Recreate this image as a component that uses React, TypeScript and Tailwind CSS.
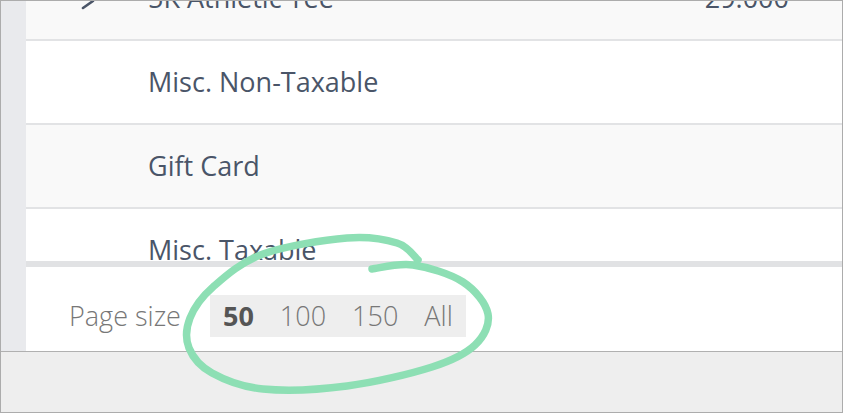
import React from "react";

const pts: [number, number][] = [
  [372, 269],
  [413, 265],
  [463, 282],
  [488, 314],
  [475, 345],
  [432, 367],
  [347, 386],
  [263, 389],
  [212, 373],
  [189, 348],
  [190, 318],
  [213, 287],
  [263, 254],
  [347, 238],
  [397, 243],
  [418, 260],
];

function catmull(points: [number, number][]) {
  let d = `M ${points[0][0]} ${points[0][1]}`;
  for (let i = 0; i < points.length - 1; i++) {
    const p0 = points[i - 1] || points[i];
    const p1 = points[i];
    const p2 = points[i + 1];
    const p3 = points[i + 2] || p2;
    const c1x = p1[0] + (p2[0] - p0[0]) / 6;
    const c1y = p1[1] + (p2[1] - p0[1]) / 6;
    const c2x = p2[0] - (p3[0] - p1[0]) / 6;
    const c2y = p2[1] - (p3[1] - p1[1]) / 6;
    d += ` C ${c1x} ${c1y} ${c2x} ${c2y} ${p2[0]} ${p2[1]}`;
  }
  return d;
}

const font = { fontFamily: '"Open Sans", "Noto Sans", sans-serif' };

function Row({
  label,
  value,
  bg,
  chevron,
  className = "",
}: {
  label: string;
  value?: string;
  bg: string;
  chevron?: boolean;
  className?: string;
}) {
  return (
    <div
      className={`relative flex h-[84px] shrink-0 items-center border-b-2 border-[#e2e3e5] pr-[53px] text-[27px] text-[#4a5568] ${bg} ${className}`}
    >
      <div className="flex w-[122px] shrink-0 items-center pl-[55px]">
        {chevron && (
          <svg width="14" height="18" viewBox="0 0 14 18" className="mt-[6px]">
            <polyline
              points="2,2 12,9 2,16"
              fill="none"
              stroke="#4a5568"
              strokeWidth="2.6"
              strokeLinecap="round"
              strokeLinejoin="round"
            />
          </svg>
        )}
      </div>
      <span className="flex-1">{label}</span>
      {value && <span>{value}</span>}
    </div>
  );
}

export default function App() {
  return (
    <div
      className="relative flex h-[413px] w-[843px] flex-col overflow-hidden border border-[#acacac] bg-white"
      style={font}
    >
      <div className="flex h-[350px] shrink-0">
        <div className="w-[25px] shrink-0 bg-[#e9eaed]" />
        <div className="flex flex-1 flex-col">
          <div className="flex h-[260px] shrink-0 flex-col overflow-hidden">
            <Row label="5K Athletic Tee" value="29.000" bg="bg-[#f9f9f9]" chevron className="-mt-[44px]" />
            <Row label="Misc. Non-Taxable" bg="bg-white" />
            <Row label="Gift Card" bg="bg-[#f9f9f9]" />
            <Row label="Misc. Taxable" bg="bg-white" />
          </div>
          <div className="h-[6px] shrink-0 bg-[#e1e2e4]" />
          <div className="flex flex-1 items-start pl-[43px] pt-[28px]">
            <div className="flex h-[42px] items-center text-[27px] font-light text-[#777777]">
              Page size
            </div>
            <div className="ml-[29px] flex h-[42px] items-center gap-[26px] bg-[#eeeeee] px-[13px] text-[27px] font-light text-[#777777]">
              <span className="font-bold text-[#555555]">50</span>
              <span>100</span>
              <span>150</span>
              <span>All</span>
            </div>
          </div>
        </div>
      </div>
      <div className="flex-1 border-t border-[#b0b0b0] bg-[#eeeeee]" />
      <svg
        className="pointer-events-none absolute left-[-1px] top-[-1px]"
        width="843"
        height="413"
        viewBox="0 0 843 413"
      >
        <path
          d={catmull(pts)}
          fill="none"
          stroke="#8ddfb4"
          strokeWidth="7.5"
          strokeLinecap="round"
          strokeLinejoin="round"
        />
      </svg>
    </div>
  );
}
